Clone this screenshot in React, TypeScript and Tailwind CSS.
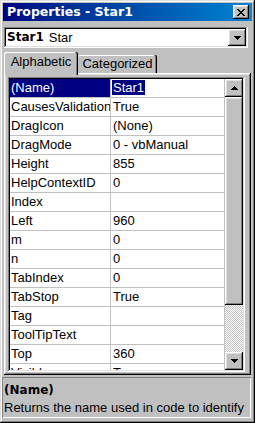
import React from 'react';

const raised =
  'shadow-[inset_-1px_-1px_#000,inset_1px_1px_#fff,inset_-2px_-2px_#808080,inset_2px_2px_#dfdfdf]';
const sunken =
  'shadow-[inset_-1px_-1px_#fff,inset_1px_1px_#808080,inset_-2px_-2px_#dfdfdf,inset_2px_2px_#000]';

const rows: [string, string][] = [
  ['(Name)', 'Star1'],
  ['CausesValidation', 'True'],
  ['DragIcon', '(None)'],
  ['DragMode', '0 - vbManual'],
  ['Height', '855'],
  ['HelpContextID', '0'],
  ['Index', ''],
  ['Left', '960'],
  ['m', '0'],
  ['n', '0'],
  ['TabIndex', '0'],
  ['TabStop', 'True'],
  ['Tag', ''],
  ['ToolTipText', ''],
  ['Top', '360'],
  ['Visible', 'True'],
];

// pixel X of the close box
const closeX = ['##....##', '.##..##.', '..####..', '...##...', '..####..', '.##..##.', '##....##'];

function CloseGlyph() {
  return (
    <svg width="8" height="7" viewBox="0 0 8 7" shapeRendering="crispEdges">
      {closeX.map((line, y) =>
        line.split('').map((c, x) => (c === '#' ? <rect key={`${x}-${y}`} x={x} y={y} width="1" height="1" fill="#000" /> : null))
      )}
    </svg>
  );
}

function Arrow({ up }: { up?: boolean }) {
  return (
    <svg width="7" height="4" viewBox="0 0 7 4" shapeRendering="crispEdges">
      <path d={up ? 'M3 0h1v1h1v1h1v1h1v1H0V3h1V2h1V1h1z' : 'M0 0h7v1H6v1H5v1H4v1H3V3H2V2H1V1H0z'} fill="#000" />
    </svg>
  );
}

export default function App() {
  return (
    <div className="w-[255px] h-[423px] bg-[#c0c0c0] shadow-[inset_-1px_-1px_#000,inset_1px_1px_#dfdfdf,inset_-2px_-2px_#808080,inset_2px_2px_#fff] flex flex-col overflow-hidden font-['Liberation_Sans',Arial,sans-serif] text-[13px] text-black">
      {/* Title bar */}
      <div className="mx-[3px] mt-[3px] h-[18px] bg-gradient-to-r from-[#000080] to-[#1084d0] flex items-center pl-[4px] pr-[3px]">
        <span className="flex-1 font-['DejaVu_Sans',Verdana,sans-serif] font-bold text-[12.5px] leading-none text-white whitespace-nowrap">
          Properties - Star1
        </span>
        <div className={`w-[16px] h-[14px] bg-[#c0c0c0] ${raised} flex items-center justify-center`}>
          <CloseGlyph />
        </div>
      </div>

      {/* Object combo */}
      <div className={`mt-[6px] ml-[4px] w-[244px] h-[21px] bg-white ${sunken} p-[2px] flex items-center`}>
        <div className="flex-1 flex items-center pl-[1px] overflow-hidden whitespace-nowrap leading-[17px]">
          <span className="font-['DejaVu_Sans',Verdana,sans-serif] font-bold text-[12px]">Star1</span>
          <span className="ml-[5px]">Star</span>
        </div>
        <div className={`w-[18px] h-[17px] bg-[#c0c0c0] ${raised} flex items-center justify-center`}>
          <Arrow />
        </div>
      </div>

      {/* Tabs */}
      <div className="mt-[4px] ml-[4px] h-[21px] flex items-end relative z-10">
        <div className="w-[74px] h-[23px] -mb-[2px] bg-[#c0c0c0] rounded-t-[2px] shadow-[inset_-1px_0_#000,inset_-2px_0_#808080,inset_1px_1px_#fff] flex items-center justify-center pb-[3px]">
          Alphabetic
        </div>
        <div className="w-[79px] h-[18px] bg-[#c0c0c0] rounded-t-[2px] shadow-[inset_-1px_0_#000,inset_-2px_0_#808080,inset_0_1px_#fff] flex items-center justify-center">
          Categorized
        </div>
      </div>

      {/* Tab page */}
      <div className={`ml-[4px] w-[247px] h-[302px] ${raised} pt-[4px] pl-[4px]`}>
        <div className={`w-[237px] h-[295px] bg-white ${sunken} p-[2px] flex`}>
          <div className="w-[215px] overflow-hidden">
            {rows.map(([name, value], i) => (
              <div key={name} className="h-[19px] flex border-b border-[#c0c0c0] leading-[18px] whitespace-nowrap">
                <div
                  className={`w-[101px] border-r border-[#c0c0c0] pl-[1px] overflow-hidden ${
                    i === 0 ? 'bg-[#000080] text-white' : ''
                  }`}
                >
                  {name}
                </div>
                <div className="w-[114px] border-r border-[#c0c0c0] pl-[1px] overflow-hidden">
                  {i === 0 ? <span className="bg-[#000080] text-white px-[1px]">{value}</span> : <span className="px-[1px]">{value}</span>}
                </div>
              </div>
            ))}
          </div>
          {/* Scrollbar */}
          <div className="w-[18px] flex flex-col">
            <div className={`h-[18px] bg-[#c0c0c0] ${raised} flex items-center justify-center`}>
              <Arrow up />
            </div>
            <div className={`h-[208px] bg-[#c0c0c0] ${raised}`} />
            <div className="flex-1 bg-[conic-gradient(#fff_25%,#c0c0c0_0_50%,#fff_0_75%,#c0c0c0_0)] bg-[length:2px_2px]" />
            <div className={`h-[18px] bg-[#c0c0c0] ${raised} flex items-center justify-center`}>
              <Arrow />
            </div>
          </div>
        </div>
      </div>

      {/* Description */}
      <div className="mt-[2px] ml-[2px] w-[249px] h-[41px] shadow-[inset_1px_1px_#808080,inset_-1px_-1px_#fff] px-[2px] pt-[4px] overflow-hidden leading-[18px] whitespace-nowrap">
        <div className="font-['DejaVu_Sans',Verdana,sans-serif] font-bold text-[12px]">(Name)</div>
        <div>Returns the name used in code to identify</div>
      </div>
    </div>
  );
}
